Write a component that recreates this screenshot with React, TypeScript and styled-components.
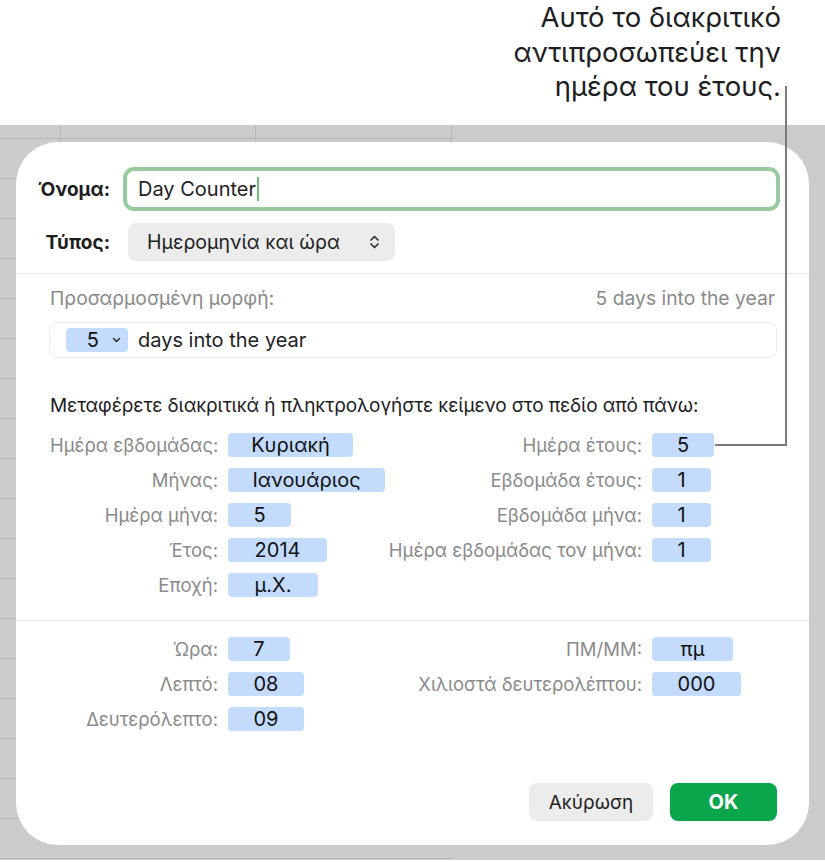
import styled, { createGlobalStyle } from 'styled-components';

const GlobalStyle = createGlobalStyle`
  html, body {
    margin: 0;
    padding: 0;
    background: #fff;
  }
  body {
    font-family: Inter, "Noto Sans", "DejaVu Sans", sans-serif;
    -webkit-font-smoothing: antialiased;
  }
`;

const Page = styled.div`
  position: relative;
  width: 825px;
  height: 862px;
  overflow: hidden;
  background: #fff;
`;

const Callout = styled.div`
  height: 125px;
  box-sizing: border-box;
  padding: 0 44px 0 0;
  text-align: right;
  font-size: 27.5px;
  line-height: 34.5px;
  color: #1d1d1f;
`;

const Leader = styled.div<{ $dir: 'v' | 'h' }>`
  position: absolute;
  background: #7b7b7b;
  ${({ $dir }) =>
    $dir === 'v'
      ? 'left: 785px; top: 86px; width: 2px; height: 360px;'
      : 'left: 715px; top: 444px; width: 72px; height: 2px;'}
`;

const Sheet = styled.div`
  height: 735px;
  box-sizing: border-box;
  padding: 17px 16px 15px;
  background-color: #cbcbcb;
  background-image:
    linear-gradient(
      to right,
      transparent 60px,
      #b7b7b7 60px 61px,
      transparent 61px 255px,
      #b7b7b7 255px 256px,
      transparent 256px 451px,
      #b7b7b7 451px 452px,
      transparent 452px
    ),
    linear-gradient(to bottom, #b7b7b7 1px, transparent 1px);
  background-size: 100% 17px, 451px 40px;
  background-position: 0 0, 0 13px;
  background-repeat: no-repeat, repeat-y;
`;

const Dialog = styled.div`
  height: 100%;
  box-sizing: border-box;
  background: #fff;
  border-radius: 42px;
  display: flex;
  flex-direction: column;
  padding-bottom: 24px;
`;

const Header = styled.div`
  display: flex;
  flex-direction: column;
  gap: 12px;
  padding: 25px 29px 12px 21px;
`;

const HeaderRow = styled.div`
  display: flex;
  align-items: center;
  gap: 13px;
`;

const HeaderLabel = styled.span`
  width: 73px;
  text-align: right;
  font-size: 19px;
  font-weight: 700;
  color: #1d1d1f;
`;

const NameField = styled.div`
  flex: 1;
  height: 44px;
  box-sizing: border-box;
  border: 4px solid #97cb9f;
  border-radius: 11px;
  display: flex;
  align-items: center;
  padding-left: 11px;
  font-size: 20px;
  color: #222;
`;

const Caret = styled.span`
  display: inline-block;
  width: 2px;
  height: 24px;
  margin-left: 1px;
  background: #6dbf7c;
`;

const PopUp = styled.div`
  margin-left: 5px;
  width: 267px;
  height: 38px;
  box-sizing: border-box;
  border-radius: 8px;
  background: #ececec;
  display: flex;
  align-items: center;
  justify-content: space-between;
  padding: 0 15px 0 19px;
  font-size: 19.5px;
  color: #222;
`;

const Divider = styled.div`
  height: 1px;
  background: #e4e4e4;
`;

const FormatSection = styled.div`
  display: flex;
  flex-direction: column;
  padding: 14px 32px 0 33px;
`;

const FormatHead = styled.div`
  display: flex;
  justify-content: space-between;
  padding: 0 2px 0 1px;
  height: 20px;
  align-items: center;
  font-size: 19.3px;
  color: #8a8a8a;
`;

const FormatField = styled.div`
  margin-top: 14px;
  height: 36px;
  box-sizing: border-box;
  border: 1px solid #ececec;
  border-radius: 8px;
  display: flex;
  align-items: center;
  gap: 10px;
  padding-left: 16px;
  font-size: 20px;
  color: #1d1d1f;
`;

const MenuToken = styled.span`
  width: 62px;
  height: 24px;
  box-sizing: border-box;
  border-radius: 4px;
  background: #c3dcfd;
  display: flex;
  align-items: center;
  justify-content: flex-end;
  gap: 13px;
  padding-right: 7px;
  font-size: 20px;
  color: #111;
`;

const Hint = styled.div`
  margin-top: 37px;
  padding-left: 1px;
  height: 20px;
  display: flex;
  align-items: center;
  font-size: 19px;
  letter-spacing: -0.1px;
  color: #1d1d1f;
`;

const TokenGrid = styled.div<{ $top: number }>`
  display: grid;
  grid-template-columns: 168px 150px 254px 100px;
  column-gap: 10px;
  row-gap: 11px;
  padding: ${({ $top }) => $top}px 0 0 34px;
`;

const TokenLabel = styled.span`
  height: 24px;
  line-height: 24px;
  text-align: right;
  white-space: nowrap;
  font-size: 18.5px;
  color: #8a8a8a;
`;

const Token = styled.span<{ $w: number }>`
  justify-self: start;
  width: ${({ $w }) => $w}px;
  height: 24px;
  border-radius: 4px;
  background: #c3dcfd;
  display: flex;
  align-items: center;
  justify-content: center;
  font-size: 20px;
  color: #111;
`;

const TimeDivider = styled(Divider)`
  margin-top: 23px;
`;

const Footer = styled.div`
  margin-top: auto;
  display: flex;
  justify-content: flex-end;
  align-items: center;
  gap: 17px;
  padding-right: 32px;
`;

const Button = styled.button<{ $primary?: boolean }>`
  height: 38px;
  width: ${({ $primary }) => ($primary ? 107 : 124)}px;
  border: none;
  border-radius: 8px;
  font-family: inherit;
  font-size: ${({ $primary }) => ($primary ? 20 : 19)}px;
  font-weight: ${({ $primary }) => ($primary ? 700 : 400)};
  background: ${({ $primary }) => ($primary ? '#0aa64c' : '#ececec')};
  color: ${({ $primary }) => ($primary ? '#fff' : '#222')};
`;

type Row = [string, string, number, string?, string?, number?];

const dateRows: Row[] = [
  ['Ημέρα εβδομάδας:', 'Κυριακή', 125, 'Ημέρα έτους:', '5', 62],
  ['Μήνας:', 'Ιανουάριος', 157, 'Εβδομάδα έτους:', '1', 59],
  ['Ημέρα μήνα:', '5', 63, 'Εβδομάδα μήνα:', '1', 59],
  ['Έτος:', '2014', 99, 'Ημέρα εβδομάδας τον μήνα:', '1', 59],
  ['Εποχή:', 'μ.Χ.', 90],
];

const timeRows: Row[] = [
  ['Ώρα:', '7', 62, 'ΠΜ/ΜΜ:', 'πμ', 81],
  ['Λεπτό:', '08', 76, 'Χιλιοστά δευτερολέπτου:', '000', 89],
  ['Δευτερόλεπτο:', '09', 76],
];

const UpDown = () => (
  <svg width="11" height="16" viewBox="0 0 11 16" fill="none" stroke="#333" strokeWidth="1.7" strokeLinecap="round" strokeLinejoin="round">
    <path d="M2 6 L5.5 2.5 L9 6" />
    <path d="M2 10 L5.5 13.5 L9 10" />
  </svg>
);

const ChevronDown = () => (
  <svg width="9" height="6" viewBox="0 0 9 6" fill="none" stroke="#333" strokeWidth="1.6" strokeLinecap="round" strokeLinejoin="round">
    <path d="M1.5 1.5 L4.5 4.5 L7.5 1.5" />
  </svg>
);

const Tokens = ({ rows, top }: { rows: Row[]; top: number }) => (
  <TokenGrid $top={top}>
    {rows.flatMap(([l1, v1, w1, l2, v2, w2]) => [
      <TokenLabel key={l1}>{l1}</TokenLabel>,
      <Token key={l1 + 't'} $w={w1}>{v1}</Token>,
      <TokenLabel key={l1 + 'r'}>{l2 ?? ''}</TokenLabel>,
      v2 ? <Token key={l1 + 'rt'} $w={w2 ?? 59}>{v2}</Token> : <span key={l1 + 'e'} />,
    ])}
  </TokenGrid>
);

export default function App() {
  return (
    <Page>
      <GlobalStyle />
      <Callout>
        Αυτό το διακριτικό
        <br />
        αντιπροσωπεύει την
        <br />
        ημέρα του έτους.
      </Callout>
      <Sheet>
        <Dialog>
          <Header>
            <HeaderRow>
              <HeaderLabel>Όνομα:</HeaderLabel>
              <NameField>
                Day Counter
                <Caret />
              </NameField>
            </HeaderRow>
            <HeaderRow>
              <HeaderLabel>Τύπος:</HeaderLabel>
              <PopUp>
                Ημερομηνία και ώρα
                <UpDown />
              </PopUp>
            </HeaderRow>
          </Header>
          <Divider />
          <FormatSection>
            <FormatHead>
              <span>Προσαρμοσμένη μορφή:</span>
              <span>5 days into the year</span>
            </FormatHead>
            <FormatField>
              <MenuToken>
                5
                <ChevronDown />
              </MenuToken>
              days into the year
            </FormatField>
            <Hint>Μεταφέρετε διακριτικά ή πληκτρολογήστε κείμενο στο πεδίο από πάνω:</Hint>
          </FormatSection>
          <Tokens rows={dateRows} top={18} />
          <TimeDivider />
          <Tokens rows={timeRows} top={16} />
          <Footer>
            <Button>Ακύρωση</Button>
            <Button $primary>OK</Button>
          </Footer>
        </Dialog>
      </Sheet>
      <Leader $dir="v" />
      <Leader $dir="h" />
    </Page>
  );
}
